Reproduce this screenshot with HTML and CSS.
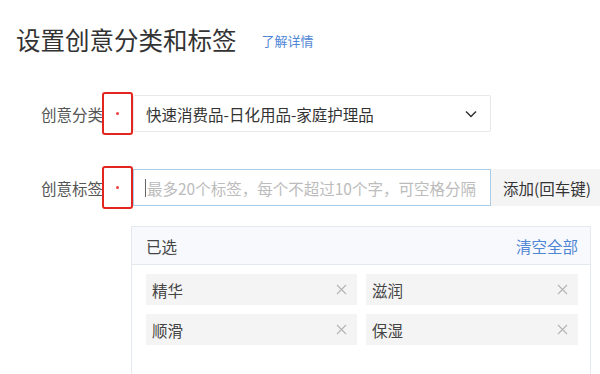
FILE: index.html
```html
<!DOCTYPE html>
<html lang="zh-CN">
<head>
<meta charset="utf-8">
<link rel="stylesheet" href="styles.css">
</head>
<body>
<h1 class="title">设置创意分类和标签<a class="more">了解详情</a></h1>
<div class="row row1">
  <div class="label">创意分类</div>
  <div class="req"><span class="dot"></span></div>
  <div class="select">
    <span class="value">快速消费品-日化用品-家庭护理品</span>
    <svg class="chev" width="12" height="8" viewBox="0 0 12 8"><path d="M1 1.5 L6 6.5 L11 1.5" fill="none" stroke="#333" stroke-width="1.5"/></svg>
  </div>
</div>
<div class="row row2">
  <div class="label">创意标签</div>
  <div class="req"><span class="dot"></span></div>
  <div class="input"><span class="caret"></span><span class="ph">最多20个标签，每个不超过10个字，可空格分隔</span></div>
  <div class="btn">添加(回车键)</div>
</div>
<div class="panel">
  <div class="panel-head"><span>已选</span><a class="clear">清空全部</a></div>
  <div class="tags">
    <div class="tag"><span>精华</span><svg class="x" width="11" height="11" viewBox="0 0 11 11"><path d="M1 1 L10 10 M10 1 L1 10" stroke="#b5b5b5" stroke-width="1.2"/></svg></div>
    <div class="tag"><span>滋润</span><svg class="x" width="11" height="11" viewBox="0 0 11 11"><path d="M1 1 L10 10 M10 1 L1 10" stroke="#b5b5b5" stroke-width="1.2"/></svg></div>
    <div class="tag"><span>顺滑</span><svg class="x" width="11" height="11" viewBox="0 0 11 11"><path d="M1 1 L10 10 M10 1 L1 10" stroke="#b5b5b5" stroke-width="1.2"/></svg></div>
    <div class="tag"><span>保湿</span><svg class="x" width="11" height="11" viewBox="0 0 11 11"><path d="M1 1 L10 10 M10 1 L1 10" stroke="#b5b5b5" stroke-width="1.2"/></svg></div>
  </div>
</div>
</body>
</html>
```
FILE: styles.css
```css
html, body {
  margin: 0;
  padding: 0;
  background: #fff;
  width: 600px;
  height: 374px;
  overflow: hidden;
}
body {
  font-family: "Noto Sans CJK SC", "Noto Sans", sans-serif;
  color: #333;
}
.title {
  margin: 0;
  padding: 22px 0 0 16px;
  font-size: 24.5px;
  line-height: 32px;
  font-weight: 400;
  color: #333;
  display: flex;
  align-items: center;
}
.more {
  margin-left: 25px;
  font-size: 13px;
  color: #4f86d6;
  margin-top: 3px;
}
.row {
  display: flex;
  align-items: center;
  padding-left: 41px;
}
.row1 { margin-top: 35px; }
.row2 { margin-top: 31px; }
.label {
  width: 62px;
  flex-shrink: 0;
  font-size: 15.5px;
  color: #555;
  white-space: nowrap;
}
.req {
  width: 31px;
  height: 43px;
  flex-shrink: 0;
  box-sizing: border-box;
  border: 2px solid #e3251f;
  border-radius: 3px;
  margin-left: -1px;
  display: flex;
  align-items: center;
  justify-content: center;
  position: relative;
  z-index: 1;
}
.dot {
  width: 3px;
  height: 3px;
  border-radius: 50%;
  background: #e8443c;
  margin-top: -1px;
}
.select {
  width: 358px;
  height: 37px;
  flex-shrink: 0;
  box-sizing: border-box;
  border: 1px solid #e8e8e8;
  border-radius: 2px;
  display: flex;
  align-items: center;
  justify-content: space-between;
  padding: 0 13px 0 12px;
  font-size: 15.5px;
  color: #333;
}
.chev { margin-top: 1px; }
.input {
  width: 358px;
  height: 37px;
  flex-shrink: 0;
  box-sizing: border-box;
  border: 1px solid #a9cde8;
  display: flex;
  align-items: center;
  padding-left: 11px;
  font-size: 15.5px;
  overflow: hidden;
}
.caret {
  width: 1px;
  height: 18px;
  background: #666;
  margin-right: 1px;
  flex-shrink: 0;
}
.ph { color: #bcbcbc; white-space: nowrap; }
.btn {
  height: 37px;
  width: 120px;
  flex-shrink: 0;
  box-sizing: border-box;
  background: #f4f4f4;
  display: flex;
  align-items: center;
  padding-left: 12px;
  font-size: 15.5px;
  color: #333;
  white-space: nowrap;
}
.panel {
  margin: 17px 0 0 131px;
  width: 460px;
  height: 160px;
  box-sizing: border-box;
  border: 1px solid #e4e9f0;
}
.panel-head {
  height: 38px;
  box-sizing: border-box;
  background: #f7f9fc;
  border-bottom: 1px solid #e4e9f0;
  display: flex;
  align-items: center;
  justify-content: space-between;
  padding: 0 12px 0 14px;
  font-size: 15.5px;
  color: #444;
}
.clear { color: #4f86d6; }
.tags {
  display: grid;
  grid-template-columns: 211px 212px;
  column-gap: 9px;
  row-gap: 9px;
  padding: 9px 0 0 14px;
}
.tag {
  height: 31px;
  background: #f4f4f4;
  display: flex;
  align-items: center;
  justify-content: space-between;
  padding: 0 10px 0 6px;
  font-size: 15.5px;
  color: #444;
}
```
